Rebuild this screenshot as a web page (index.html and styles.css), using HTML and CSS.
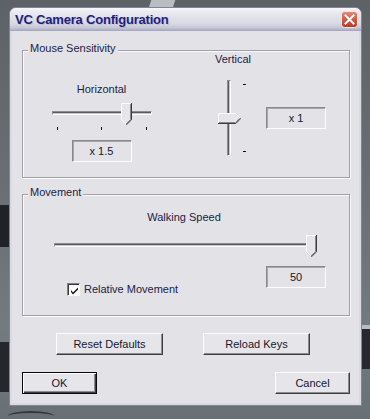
FILE: index.html
```html
<!DOCTYPE html>
<html>
<head>
<meta charset="utf-8">
<link rel="stylesheet" href="styles.css">
</head>
<body>
<div class="scene">
  <div class="bg bg-stripe"></div>
  <div class="bg bg-left1"></div>
  <div class="bg bg-left2"></div>
  <div class="bg bg-right1"></div>
  <div class="bg bg-bottom"></div>
  <div class="window">
    <div class="titlebar">
      <span class="title">VC Camera Configuration</span>
      <span class="close">
        <svg width="17" height="17" viewBox="0 0 17 17">
          <defs>
            <linearGradient id="cg" x1="0" y1="0" x2="0" y2="1">
              <stop offset="0" stop-color="#e88a7a"/>
              <stop offset="0.5" stop-color="#d05a44"/>
              <stop offset="1" stop-color="#b83a28"/>
            </linearGradient>
          </defs>
          <rect x="0.5" y="0.5" width="16" height="16" rx="3" fill="url(#cg)" stroke="#f4e6e4"/>
          <path d="M4.5 4.5 L12.5 12.5 M12.5 4.5 L4.5 12.5" stroke="#fff" stroke-width="2" stroke-linecap="square"/>
        </svg>
      </span>
    </div>
    <div class="client">
      <div class="group group-mouse">
        <span class="legend">Mouse Sensitivity</span>
        <div class="mouse-body">
          <div class="hcol">
            <div class="label label-h">Horizontal</div>
            <div class="hslider hslider-short">
              <div class="htrack"></div>
              <svg class="hthumb hthumb-short" width="11" height="22" viewBox="0 0 11 22">
                <polygon points="0.5,0.5 9.5,0.5 9.5,16.5 5,21 0.5,16.5" fill="#e6e6ea"/>
                <polyline points="0.5,16.5 0.5,0.5 9.5,0.5" fill="none" stroke="#fff"/>
                <line x1="0.5" y1="16.5" x2="5" y2="21" stroke="#fff"/>
                <polyline points="9.5,1 9.5,16.5 5,21" fill="none" stroke="#8a8a8a"/>
                <polyline points="10.5,0 10.5,16.8 5.2,22" fill="none" stroke="#3c3c3c"/>
              </svg>
            </div>
            <div class="ticks"><i></i><i></i><i></i></div>
            <div class="edit edit-h">x 1.5</div>
          </div>
          <div class="vcol">
            <div class="label label-v">Vertical</div>
            <div class="vslider">
              <div class="vtrack-wrap">
                <div class="vtrack"></div>
                <svg class="vthumb" width="23" height="11" viewBox="0 0 23 11">
                  <polygon points="0.5,0.5 17.5,0.5 22,5 17.5,9.5 0.5,9.5" fill="#e6e6ea"/>
                  <polyline points="0.5,9.5 0.5,0.5 17.5,0.5 22,5" fill="none" stroke="#fff"/>
                  <polyline points="1,9.5 17.5,9.5 21.5,5.5" fill="none" stroke="#8a8a8a"/>
                  <polyline points="0,10.5 17.8,10.5 23,5.2" fill="none" stroke="#3c3c3c"/>
                </svg>
              </div>
              <div class="vticks"><i></i><i></i></div>
            </div>
          </div>
          <div class="edit edit-v">x 1</div>
        </div>
      </div>

      <div class="group group-move">
        <span class="legend">Movement</span>
        <div class="label label-walk">Walking Speed</div>
        <div class="hslider hslider-long">
          <div class="htrack"></div>
          <svg class="hthumb hthumb-long" width="11" height="22" viewBox="0 0 11 22">
            <polygon points="0.5,0.5 9.5,0.5 9.5,16.5 5,21 0.5,16.5" fill="#e6e6ea"/>
            <polyline points="0.5,16.5 0.5,0.5 9.5,0.5" fill="none" stroke="#fff"/>
            <line x1="0.5" y1="16.5" x2="5" y2="21" stroke="#fff"/>
            <polyline points="9.5,1 9.5,16.5 5,21" fill="none" stroke="#8a8a8a"/>
            <polyline points="10.5,0 10.5,16.8 5.2,22" fill="none" stroke="#3c3c3c"/>
          </svg>
        </div>
        <div class="move-row">
          <label class="check">
            <span class="box">
              <svg width="9" height="9" viewBox="0 0 9 9"><path d="M1 4 L3 6.5 L8 1.5 L8 3.5 L3 8.5 L1 6 Z" fill="#111"/></svg>
            </span>
            <span>Relative Movement</span>
          </label>
          <div class="edit edit-walk">50</div>
        </div>
      </div>

      <div class="btn-row btn-row-top">
        <span class="btn btn-wide">Reset Defaults</span>
        <span class="btn btn-wide">Reload Keys</span>
      </div>
      <div class="btn-row btn-row-bottom">
        <span class="btn btn-default">OK</span>
        <span class="btn">Cancel</span>
      </div>
    </div>
  </div>
</div>
</body>
</html>
```

FILE: styles.css
```css
* { box-sizing: border-box; }
html, body { margin: 0; padding: 0; }
body {
  width: 370px;
  height: 419px;
  overflow: hidden;
  background: #666c71;
  font-family: "Liberation Sans", Arial, sans-serif;
  font-size: 11px;
  color: #1c1c46;
}
.scene {
  position: relative;
  width: 370px;
  height: 419px;
  padding: 7px 8px 0 9px;
  background: linear-gradient(to bottom, #5d6266 0, #6a7075 200px, #737a80 330px, #687076 419px);
}
.bg { position: absolute; }
.bg-stripe {
  left: 150px; top: 0; width: 24px; height: 8px;
  background: #b9bdc0;
  transform: skewX(-18deg);
}
.bg-left1 { left: 0; top: 205px; width: 9px; height: 42px; background: #1f2226; }
.bg-left2 { left: 0; top: 342px; width: 9px; height: 50px; background: #24282c; }
.bg-right1 { left: 362px; top: 325px; width: 8px; height: 44px; background: #25282e; border-top: 4px solid #b8bcc4; }
.bg-bottom { left: 8px; top: 411px; width: 46px; height: 10px; border-radius: 50% 50% 0 0; border-top: 2px solid #34383c; }

.window {
  position: relative;
  width: 353px;
  height: 399px;
  border: 1px solid #8282a2;
  border-radius: 7px 7px 0 0;
  background: #dadae4;
  padding: 0 2px 2px;
  display: flex;
  flex-direction: column;
}
.titlebar {
  height: 23px;
  margin: 0 -2px;
  padding: 0 3px 0 5px;
  display: flex;
  align-items: center;
  justify-content: space-between;
  border-radius: 6px 6px 0 0;
  background: linear-gradient(to bottom, #f8f8fb 0, #ececf2 3px, #e2e2ea 9px, #d8d8e2 16px, #c4c4d4 20px, #a2a2be 23px);
}
.title {
  font-weight: bold;
  font-size: 13px;
  letter-spacing: -0.2px;
  color: #1e1e7c;
  text-shadow: 1px 1px 0 rgba(150,150,190,0.35);
}
.close { display: flex; width: 17px; height: 17px; }

.client {
  flex: 1;
  background: #e2e2e7;
  display: flex;
  flex-direction: column;
  padding: 19px 9px 9px 10px;
}
.group {
  position: relative;
  border: 1px solid #a0a0a8;
  box-shadow: inset 1px 1px 0 #fbfbfd, 1px 1px 0 #fbfbfd;
}
.group-mouse { height: 128px; }
.group-move { height: 122px; margin-top: 16px; display: flex; flex-direction: column; }
.legend {
  position: absolute;
  left: 5px;
  top: -9px;
  padding: 0 2px;
  line-height: 13px;
  background: #e2e2e7;
  color: #1c1c46;
}
.label { line-height: 13px; white-space: nowrap; }

.mouse-body { display: flex; align-items: flex-start; }
.hcol { width: 157px; display: flex; flex-direction: column; align-items: center; }
.label-h { margin-top: 32px; }

.hslider { position: relative; height: 22px; }
.hslider-short { width: 100px; margin-top: 7px; }
.htrack {
  position: absolute;
  left: 0; right: 0; top: 8px;
  height: 4px;
  border-top: 1px solid #8c8c90;
  border-left: 1px solid #8c8c90;
  border-bottom: 1px solid #fff;
  border-right: 1px solid #fff;
  background: #c8c8cc;
  box-shadow: inset 0 1px 0 #5a5a5e;
}
.hthumb { position: absolute; top: 0; display: block; }
.hthumb-short { left: 69px; }
.ticks {
  width: 100px;
  height: 3px;
  margin-top: 2px;
  padding: 0 5px;
  display: flex;
  justify-content: space-between;
}
.ticks i { display: block; width: 1px; height: 3px; background: #111; }

.edit {
  height: 22px;
  display: flex;
  align-items: center;
  justify-content: center;
  border: 1px solid;
  border-color: #8a8a8e #fdfdfd #fdfdfd #8a8a8e;
  box-shadow: inset 1px 1px 0 #a6a6aa;
  background: #e2e2e7;
  color: #16162e;
  font-size: 11px;
}
.edit-h { width: 60px; margin-top: 10px; }

.vcol { width: 40px; margin-left: 33px; display: flex; flex-direction: column; align-items: center; }
.label-v { margin-top: 2px; }
.vslider { align-self: flex-start; margin-left: 5px; margin-top: 14px; display: flex; height: 76px; }
.vtrack-wrap { position: relative; width: 23px; height: 76px; }
.vtrack {
  position: absolute;
  left: 9px; top: 0; bottom: 0;
  width: 4px;
  border-left: 1px solid #8c8c90;
  border-top: 1px solid #8c8c90;
  border-right: 1px solid #fff;
  border-bottom: 1px solid #fff;
  background: #c8c8cc;
  box-shadow: inset 1px 0 0 #5a5a5e;
}
.vthumb { position: absolute; left: 0; top: 33px; display: block; }
.vticks {
  margin-left: 2px;
  width: 3px;
  height: 76px;
  padding: 4px 0;
  display: flex;
  flex-direction: column;
  justify-content: space-between;
}
.vticks i { display: block; width: 3px; height: 1px; background: #111; }
.edit-v { width: 60px; margin-top: 56px; margin-left: 13px; }

.label-walk { margin-top: 16px; align-self: center; margin-right: 4px; }
.hslider-long { width: 262px; margin-top: 11px; margin-left: 31px; }
.hthumb-long { left: 252px; }
.move-row { display: flex; align-items: flex-start; }
.check { display: flex; align-items: center; margin-top: 26px; margin-left: 44px; line-height: 13px; }
.box {
  width: 13px; height: 13px;
  border: 1px solid;
  border-color: #808084 #fdfdfd #fdfdfd #808084;
  box-shadow: inset 1px 1px 0 #3a3a3e;
  background: #fff;
  display: flex;
  align-items: center;
  justify-content: center;
  padding: 1px 0 0 1px;
  margin-right: 4px;
}
.box svg { display: block; }
.edit-walk { width: 60px; margin-top: 9px; margin-left: auto; margin-right: 23px; }

.btn-row { display: flex; margin-top: 17px; }
.btn-row-top { padding-left: 34px; gap: 40px; }
.btn {
  width: 75px;
  height: 22px;
  display: flex;
  align-items: center;
  justify-content: center;
  background: #e6e6ea;
  border: 1px solid;
  border-color: #fdfdfd #3e3e42 #3e3e42 #fdfdfd;
  box-shadow: inset -1px -1px 0 #8c8c90;
  color: #16162e;
  font-size: 11px;
}
.btn-wide { width: 107px; }
.btn-row-bottom { justify-content: space-between; }
.btn-default {
  border: 1px solid #0a0a0a;
  box-shadow: inset 1px 1px 0 #fdfdfd, inset -1px -1px 0 #3e3e42, inset -2px -2px 0 #8c8c90;
}
```
